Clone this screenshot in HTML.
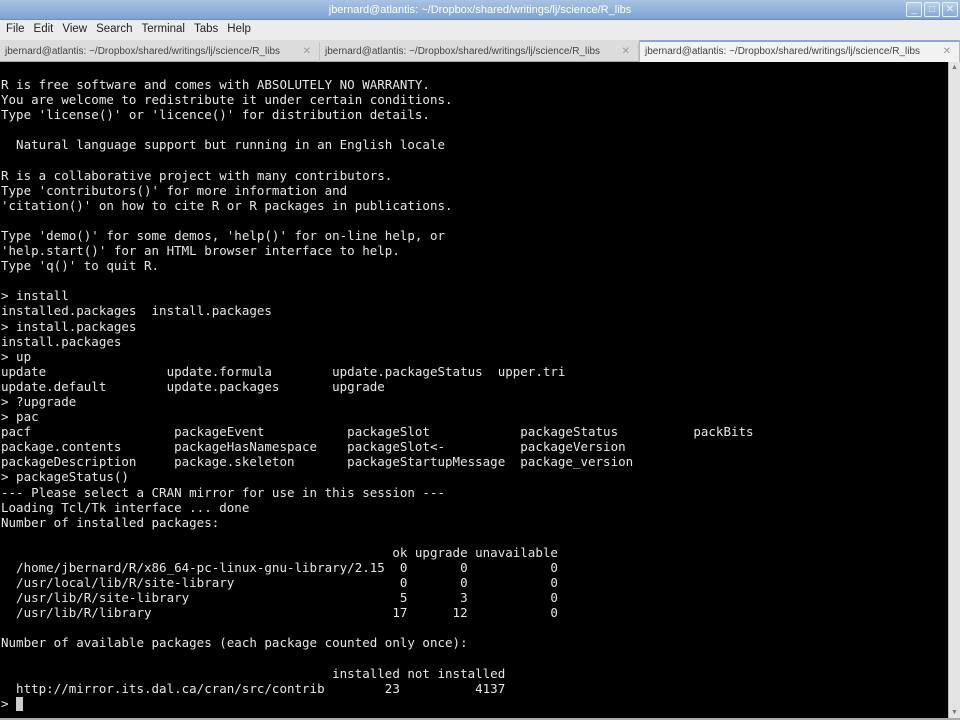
<!DOCTYPE html>
<html><head><meta charset="utf-8"><style>
*{margin:0;padding:0;box-sizing:border-box}
body{width:960px;height:720px;overflow:hidden;background:#000;font-family:"Liberation Sans","DejaVu Sans",sans-serif;position:relative}
#title{position:absolute;left:0;top:0;width:960px;height:20px;background:linear-gradient(#a8c3e3,#7fa3d1);border-bottom:1px solid #6a8cbc;color:#fff;font-size:11px;text-align:center;line-height:20px}
.wb{position:absolute;top:2px;width:16px;height:15px;border:1px solid #e8f0fa;border-radius:2px;background:linear-gradient(#b9cfe9,#88a9d4);color:#eef4fb;font-size:10px;line-height:13px;text-align:center}
#menu{position:absolute;left:0;top:20px;width:960px;height:20px;background:#ececec;font-size:11.5px;color:#222;line-height:18px}
#menu span{margin-left:6px;margin-right:3px}
#tabs{position:absolute;left:0;top:40px;width:960px;height:22px;background:#dcdcdc;border-bottom:1px solid #aaa}
.tab{position:absolute;top:2px;height:20px;font-size:10px;color:#444;line-height:19px;padding-left:5px;border-right:1px solid #c4c4c4}
.tab .x{position:absolute;right:8px;top:0;color:#999;font-size:10px}
.tab.active{top:0;height:22px;background:#f2f2f2;border:1px solid #b8b8b8;border-top:2px solid #8aa8d0;border-bottom:none;line-height:19px}
#term{position:absolute;left:0;top:62px;width:948px;height:656px;background:#000}
pre{position:absolute;left:1px;top:77px;font-family:"DejaVu Sans Mono","Liberation Mono",monospace;font-size:12.5px;line-height:15.1px;color:#e6e6e6}
#sb{position:absolute;left:948px;top:62px;width:12px;height:656px;background:#e4e4e4;border-left:1px solid #bbb;color:#777;font-size:7px;text-align:center}
#cur{display:inline-block;width:7px;height:14px;background:#ccc;vertical-align:-3px}
#bot{position:absolute;left:0;top:718px;width:960px;height:2px;background:#aaa}
</style></head><body>
<div id="title">jbernard@atlantis: ~/Dropbox/shared/writings/lj/science/R_libs
<div class="wb" style="left:906px">_</div><div class="wb" style="left:924px">□</div><div class="wb" style="left:942px">✕</div></div>
<div id="menu"><span>File</span><span>Edit</span><span>View</span><span>Search</span><span>Terminal</span><span>Tabs</span><span>Help</span></div>
<div id="tabs">
<div class="tab" style="left:0;width:320px">jbernard@atlantis: ~/Dropbox/shared/writings/lj/science/R_libs<span class="x">✕</span></div>
<div class="tab" style="left:320px;width:319px">jbernard@atlantis: ~/Dropbox/shared/writings/lj/science/R_libs<span class="x">✕</span></div>
<div class="tab active" style="left:639px;width:321px">jbernard@atlantis: ~/Dropbox/shared/writings/lj/science/R_libs<span class="x">✕</span></div>
</div>
<div id="term"></div>
<pre>R is free software and comes with ABSOLUTELY NO WARRANTY.
You are welcome to redistribute it under certain conditions.
Type 'license()' or 'licence()' for distribution details.

  Natural language support but running in an English locale

R is a collaborative project with many contributors.
Type 'contributors()' for more information and
'citation()' on how to cite R or R packages in publications.

Type 'demo()' for some demos, 'help()' for on-line help, or
'help.start()' for an HTML browser interface to help.
Type 'q()' to quit R.

&gt; install
installed.packages  install.packages
&gt; install.packages
install.packages
&gt; up
update                update.formula        update.packageStatus  upper.tri
update.default        update.packages       upgrade
&gt; ?upgrade
&gt; pac
pacf                   packageEvent           packageSlot            packageStatus          packBits
package.contents       packageHasNamespace    packageSlot&lt;-          packageVersion
packageDescription     package.skeleton       packageStartupMessage  package_version
&gt; packageStatus()
--- Please select a CRAN mirror for use in this session ---
Loading Tcl/Tk interface ... done
Number of installed packages:

                                                    ok upgrade unavailable
  /home/jbernard/R/x86_64-pc-linux-gnu-library/2.15  0       0           0
  /usr/local/lib/R/site-library                      0       0           0
  /usr/lib/R/site-library                            5       3           0
  /usr/lib/R/library                                17      12           0

Number of available packages (each package counted only once):

                                            installed not installed
  http://mirror.its.dal.ca/cran/src/contrib        23          4137
&gt; <span id="cur"></span></pre>
<div id="sb"><div style="margin-top:2px">▲</div><div style="position:absolute;bottom:2px;width:11px">▼</div></div>
<div id="bot"></div>
</body></html>
